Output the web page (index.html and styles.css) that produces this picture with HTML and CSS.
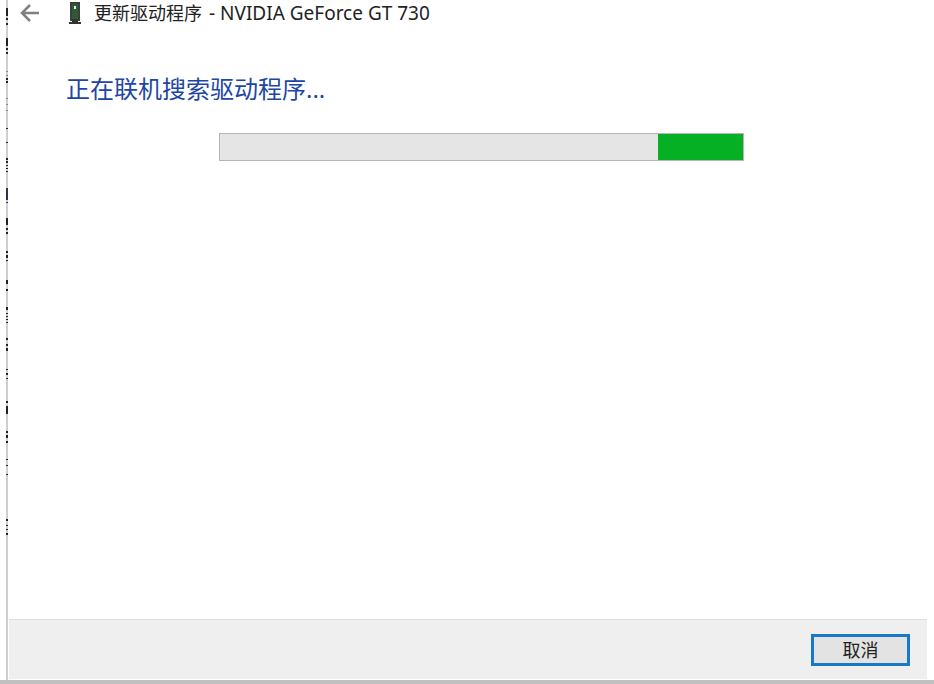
FILE: index.html
```html
<!DOCTYPE html>
<html lang="zh-CN">
<head>
  <meta charset="UTF-8">
  <meta name="viewport" content="width=device-width, initial-scale=1.0">
  <title>更新驱动程序</title>
  <link rel="stylesheet" href="styles.css">
</head>
<body>
  <div class="window">
    <!-- sliver of the window behind -->
    <svg class="edge" width="2" height="680" aria-hidden="true">
      <path stroke="#222" stroke-width="2" d="M1 8v8M1 18v2M1 23v2M1 38v8M1 48v2M1 52v2M1 78v2M1 81v2M1 128v1M1 142v1M1 158v2M1 161v2M1 165v1M1 168v1M1 171v1M1 218v7M1 228v2M1 232v2M1 251v2M1 255v3M1 260v1M1 280v4M1 289v2M1 307v3M1 313v1M1 316v1M1 319v1M1 322v1M1 338v2M1 344v2M1 348v3M1 369v1M1 373v2M1 378v1M1 401v2M1 406v8M1 431v2M1 435v3M1 441v2M1 459v1M1 465v1M1 474v1M1 519v2M1 525v1M1 529v1M1 533v2"/>
      <path stroke="#334" stroke-width="2" d="M1 188v12M1 202v1"/>
      <path stroke="#888" stroke-width="2" d="M1 71v1M1 75v1M1 98v1M1 104v1M1 110v1"/>
    </svg>
    <div class="dialog">
      <header class="titlebar">
        <button class="back" type="button" aria-label="返回">
          <svg width="20" height="18" viewBox="0 0 20 18" fill="none" stroke="#808080" stroke-width="2.5">
            <path d="M19 9H2M10 1L2 9l8 8"/>
          </svg>
        </button>
        <svg class="device" width="12" height="22" viewBox="0 0 12 22" aria-hidden="true">
          <path fill="#3b3f3c" d="M1 0h10v19H1z"/>
          <path fill="#2f5a3a" d="M3 2h6v15H3z"/>
          <path fill="#d8eedc" d="M5 4h2v3H5z"/>
          <path fill="#333" d="M3 17h6v3H3zM0 20h12v2H0z"/>
        </svg>
        <div class="title">
          <span>更新驱动程序</span>
          <span class="device-name">- NVIDIA GeForce GT 730</span>
        </div>
      </header>
      <main class="content">
        <h1 id="status">正在联机搜索驱动程序...</h1>
        <div class="progress" role="progressbar" aria-labelledby="status">
          <div class="chunk"></div>
        </div>
      </main>
      <footer class="footer">
        <button class="cancel" type="button">取消</button>
      </footer>
    </div>
  </div>
</body>
</html>
```
FILE: styles.css
```css
* {
  box-sizing: border-box;
}
body {
  margin: 0;
  background: #fff;
  color: #222;
  font-family: "Noto Sans", "Noto Sans CJK SC", sans-serif;
}
.window {
  display: flex;
  height: 100vh;
  padding-left: 6px;
  border-bottom: 4px solid #c0c0c0;
}
.edge {
  flex: none;
  height: 100%;
  background: #cfcfcf;
}
.dialog {
  flex: 1;
  display: flex;
  flex-direction: column;
  min-width: 0;
}
.titlebar {
  display: flex;
  align-items: center;
  height: 26px;
  padding-left: 12px;
}
.back {
  display: flex;
  padding: 0;
  border: none;
  background: none;
}
.device {
  margin-left: 29px;
}
.title {
  display: flex;
  align-items: baseline;
  gap: 7px;
  margin-left: 13px;
  font-size: 18px;
  line-height: 26px;
  white-space: nowrap;
}
.device-name {
  font-size: 19px;
}
.content {
  flex: 1;
  padding: 45px 58px 0;
}
h1 {
  margin: 0;
  color: #1d46a5;
  font-size: 24px;
  font-weight: normal;
  line-height: 36px;
}
.progress {
  display: flex;
  justify-content: flex-end;
  max-width: 525px;
  height: 28px;
  margin: 26px auto 0 153px;
  border: 1px solid #b5b5b5;
  background: #e5e5e5;
}
.chunk {
  width: 85px;
  background: #06b025;
}
.footer {
  display: flex;
  align-items: center;
  justify-content: flex-end;
  height: 60px;
  margin: 0 7px 1px 1px;
  padding-right: 17px;
  border-top: 1px solid #dedede;
  background: #efefef;
}
.cancel {
  width: 99px;
  height: 32px;
  padding: 0;
  border: 3px solid #1a78c8;
  background: #e3e3e3;
  color: #222;
  font-family: inherit;
  font-size: 18px;
  line-height: 26px;
}
```
